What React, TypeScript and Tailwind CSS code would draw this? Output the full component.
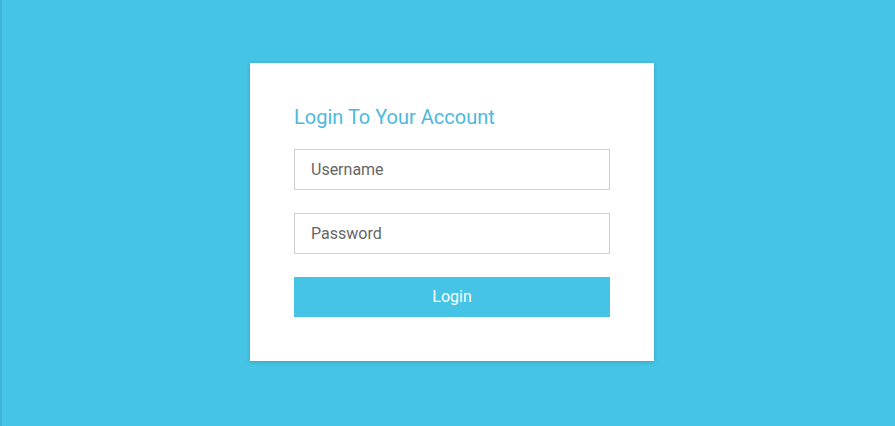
export default function App() {
  return (
    <div
      className="flex h-[426px] w-[895px] items-center justify-center border-l-2 border-[#3fb3d6] bg-[#45c4e5] pl-[7px]"
      style={{ fontFamily: 'Roboto, "Liberation Sans", sans-serif' }}
    >
      <div className="mb-[2px] flex w-[404px] flex-col bg-white px-[44px] pt-[40px] pb-[44px] shadow-[0_1px_4px_rgba(0,0,0,0.18)]">
        <h1 className="text-[20px] leading-[28px] text-[#4bb9de]">Login To Your Account</h1>
        <input
          className="mt-[18px] h-[41px] w-full border border-[#cfcfcf] px-[16px] text-[16px] text-[#555] outline-none placeholder:text-[#666]"
          placeholder="Username"
        />
        <input
          type="password"
          className="mt-[23px] h-[41px] w-full border border-[#cfcfcf] px-[16px] text-[16px] text-[#555] outline-none placeholder:text-[#666]"
          placeholder="Password"
        />
        <button className="mt-[23px] h-[40px] w-full bg-[#45c4e5] text-[16px] text-white">Login</button>
      </div>
    </div>
  );
}
